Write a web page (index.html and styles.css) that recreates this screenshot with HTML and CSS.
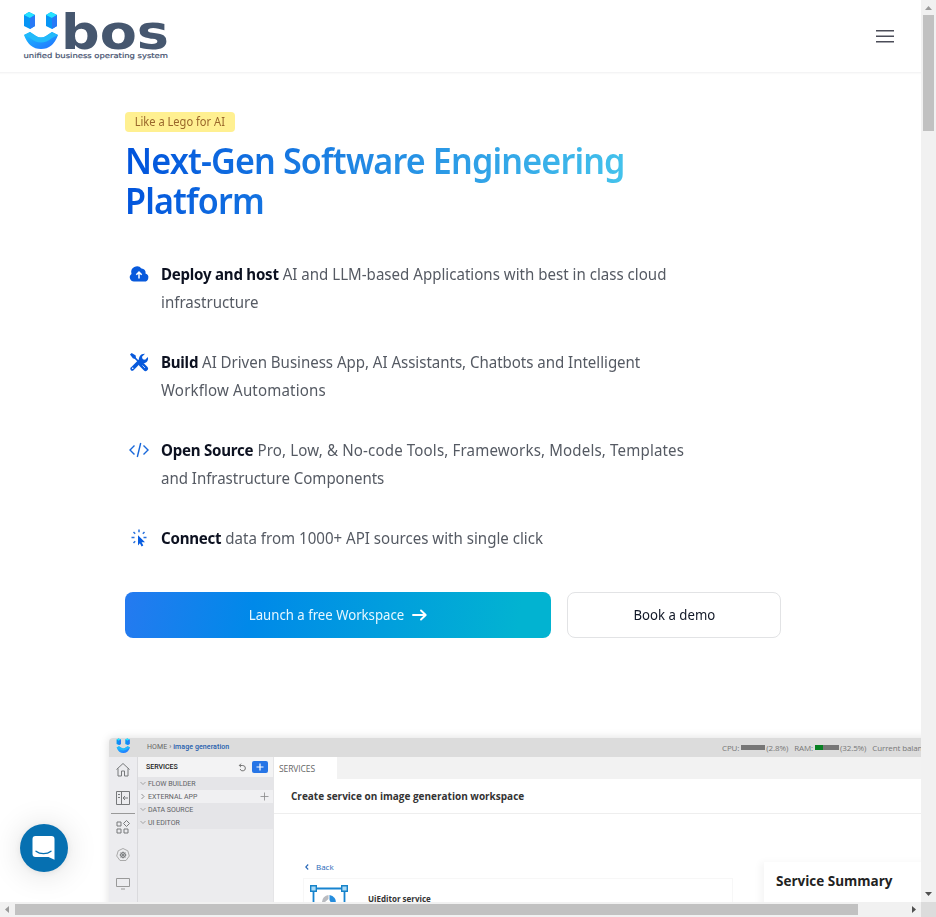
FILE: index.html
```html
<!DOCTYPE html>
<html lang="en">
<head>
<meta charset="utf-8">
<title>Ubos</title>
<link rel="stylesheet" href="styles.css">
</head>
<body>
<div class="viewport">
<div class="page">
  <header class="header">
    <svg class="logo" width="146" height="50" viewBox="0 0 146 50">
      <defs>
        <linearGradient id="smile" x1="0" x2="1" y1="0" y2="1"><stop offset="0" stop-color="#18c4ff"/><stop offset="1" stop-color="#246cff"/></linearGradient>
      </defs>
      <g id="mark" transform="translate(0 1)">
        <path d="M0 3l5-3 6 3v11l-5 3-6-3z" fill="#0795f5"/><path d="M0 3l5-3 6 3-5 3z" fill="#25e2ff"/><path d="M6 6l5-3v11l-5 3z" fill="#2879f6"/>
        <path d="M22 3l5-3 6 3v11l-5 3-6-3z" fill="#0795f5"/><path d="M22 3l5-3 6 3-5 3z" fill="#25e2ff"/><path d="M28 6l5-3v11l-5 3z" fill="#2879f6"/>
        <path d="M0 23l6-3 6 4q5 3 10 0l6-4 6 3q-5 14-17 14Q5 37 0 23z" fill="url(#smile)"/><path d="M0 23l6-3 6 4q5 3 10 0l6-4 6 3-6 3q-11 9-22 0z" fill="#22bafa"/>
      </g>
      <text class="wordmark" x="37" y="37.5" textLength="108" lengthAdjust="spacingAndGlyphs">bos</text>
      <text class="tagline" x="-.5" y="47" textLength="144.500" lengthAdjust="spacingAndGlyphs">unified business operating system</text>
    </svg>
    <svg class="burger" width="18" height="13" viewBox="0 0 18 13"><path d="M0 .75h18M0 6.250h18M0 11.750h18" stroke="#4b4d58" stroke-width="1.500"/></svg>
  </header>
  <main class="hero">
    <div class="badge"><span>Like a Lego for AI</span></div>
    <h1 class="title">Next-Gen Software Engineering<br>Platform</h1>
    <ul class="features">
      <li class="feature">
        <svg width="20" height="20" viewBox="0 0 20 20"><path d="M5 17.500a4.200 4.200 0 0 1-2.500-7.600A5.800 5.800 0 0 1 12.500 4.500a4 4 0 0 1 4 5A4.100 4.100 0 0 1 15 17.500z" fill="#0759dc"/><path d="M10 14.500v-6M7.300 10.800 10 8.100l2.700 2.700" fill="none" stroke="#fff" stroke-width="1.500"/></svg>
        <p><strong>Deploy and host</strong> AI and LLM-based Applications with best in class cloud<br>infrastructure</p>
      </li>
      <li class="feature">
        <svg width="20" height="20" viewBox="0 0 20 20"><path d="M3.200 16.800 12 8" fill="none" stroke="#0759dc" stroke-width="3.800" stroke-linecap="round"/><path d="M10 9.500c-.8-4.500 1.500-8 6-7.800l-3 3 .5 2.600 2.600.5 2.800-2.900c1 4-2.300 7.300-6.700 6z" fill="#0759dc"/><path d="M4 4l7.500 7.500" stroke="#0759dc" stroke-width="1.700"/><path d="M1 2.500 2.700 1l4 2.500.3 3.300-3-.2z" fill="#0759dc"/><path d="M12.500 12.500l4 4" stroke="#0759dc" stroke-width="5" stroke-linecap="round"/><circle cx="3.700" cy="16.300" r=".8" fill="#fff"/><path d="M13.500 13.500l2.500 2.500" stroke="#fff" stroke-width=".7"/></svg>
        <p><strong>Build</strong><span class="tight"> AI Driven Business App, AI Assistants, Chatbots and Intelligent</span><br><span class="loose">Workflow Automations</span></p>
      </li>
      <li class="feature">
        <svg width="20" height="20" viewBox="0 0 20 20"><path d="M5.500 5.500 1 10l4.500 4.500M14.500 5.500 19 10l-4.500 4.500M11.700 3 8.300 17" fill="none" stroke="#1767da" stroke-width="1.400"/></svg>
        <p><strong>Open Source</strong><span class="loose"> Pro, Low, &amp; No-code Tools, Frameworks, Models, Templates</span><br><span class="tight">and Infrastructure Components</span></p>
      </li>
      <li class="feature">
        <svg width="20" height="20" viewBox="0 0 20 20"><path d="M9 7.200l7 7-3.400.1 1.700 3.300-1.700.9-1.700-3.300-1.900 2.200z" fill="#075ce0"/><path d="M10 1.500v2.700M4.500 4l1.700 1.700M15.500 4l-1.700 1.700M2.500 9.500h3M14.500 9.500h3M4.500 15l1.700-1.700" stroke="#2771de" stroke-width="1.500"/></svg>
        <p><strong>Connect</strong> data from 1000+ API sources with single click</p>
      </li>
    </ul>
    <div class="actions">
      <a class="btn primary"><span>Launch a free Workspace</span><svg width="16" height="12" viewBox="0 0 16 12"><path d="M1 6h12.500M9 1.500 13.700 6 9 10.500" fill="none" stroke="#fff" stroke-width="1.900" stroke-linecap="round" stroke-linejoin="round"/></svg></a>
      <a class="btn secondary"><span>Book a demo</span></a>
    </div>
  </main>
  <section class="mock">
    <div class="mock-bar">
      <svg class="mini" width="15" height="15" viewBox="0 0 35 38"><use href="#mark"/></svg>
      <span class="crumb">HOME <i>›</i> <b>image generation</b></span>
      <span class="stats"><span>CPU:</span><i class="meter"></i><span>(2.8%)</span><span class="ram">RAM:</span><i class="meter used"></i><span>(32.5%)</span><span class="bal">Current balance</span></span>
    </div>
    <div class="mock-body">
      <div class="rail">
        <svg width="28" height="145" viewBox="0 0 28 145" fill="none" stroke="#77797b" stroke-width="1">
          <path d="M7.500 12.500 14 6.500l6.500 6M9 11.500V19h3.500v-5h3v5H19v-7.500"/>
          <path d="M7.500 34.500h13v13h-13zM12.500 34.500v13M9 37.500h2M9 40.500h2M19 41h-5M16 39l-2 2 2 2"/>
          <path d="M2 56.500h24" stroke="#999"/>
          <path d="M8 65h4v4H8zM8 72h4v4H8zM15 72h4v4h-4zM17.500 63.500l3 3-3 3-3-3z"/>
          <path d="M14 91.500l4.800 2.300 1.500 5.200-3.300 4.500h-6L7.700 99l1.500-5.200z" stroke="#aaa"/><circle cx="14" cy="98" r="2.500"/><path d="M14 94.500v7M10.500 98h7M11.500 95.500l5 5M16.500 95.500l-5 5" stroke-width=".7"/>
          <path d="M7.500 121.500h13v8h-13zM12 132h4" stroke="#999"/>
        </svg>
      </div>
      <div class="tree">
        <div class="tree-head"><span>SERVICES</span><svg width="9" height="9" viewBox="0 0 9 9"><path d="M1.500 2.500h3.300a2.700 2.700 0 1 1-2.700 3.500M3 .7 1.300 2.500 3 4.200" fill="none" stroke="#666" stroke-width=".9"/></svg><span class="add"><svg width="8" height="8" viewBox="0 0 8 8"><path d="M4 .5v7M.5 4h7" stroke="#fff" stroke-width="1.200"/></svg></span></div>
        <div class="row"><svg width="6" height="5" viewBox="0 0 6 5"><path d="M.5 1 3 3.500 5.500 1" fill="none" stroke="#888" stroke-width=".7"/></svg><span>FLOW BUILDER</span></div>
        <div class="row open-row"><svg width="6" height="7" viewBox="0 0 6 7"><path d="M1.500 1 4 3.500 1.500 6" fill="none" stroke="#777" stroke-width=".8"/></svg><span>EXTERNAL APP</span><svg class="plus" width="9" height="9" viewBox="0 0 9 9"><path d="M4.500.5v8M.5 4.500h8" stroke="#888" stroke-width=".8"/></svg></div>
        <div class="row"><svg width="6" height="5" viewBox="0 0 6 5"><path d="M.5 1 3 3.500 5.500 1" fill="none" stroke="#888" stroke-width=".7"/></svg><span>DATA SOURCE</span></div>
        <div class="row"><svg width="6" height="5" viewBox="0 0 6 5"><path d="M.5 1 3 3.500 5.500 1" fill="none" stroke="#888" stroke-width=".7"/></svg><span>UI EDITOR</span></div>
      </div>
      <div class="work">
        <div class="tabs"><span class="tab">SERVICES</span></div>
        <div class="work-title">Create service on image generation workspace</div>
        <div class="work-body">
          <div class="left">
            <div class="back"><svg width="4" height="6" viewBox="0 0 4 6"><path d="M3.200.5.8 3l2.400 2.500" fill="none" stroke="#2868b8" stroke-width="1.100"/></svg>Back</div>
            <div class="service">
              <svg width="40" height="25" viewBox="0 0 40 25"><path d="M4.500 25V4.500h31V25" fill="none" stroke="#1784d0" stroke-width="1.800"/><path d="M1.700 1.700h5.600v5.600H1.700zM32.700 1.700h5.600v5.600h-5.600z" fill="#a9d9f6" stroke="#1683c9" stroke-width="1.400"/><path d="M13 18a7 7 0 0 1 6.500-7v4L16 18v7h-3z" fill="#b9bbc0"/><path d="M20.500 11a7 7 0 0 1 6 9l-3 2-3-6z" fill="#268ddd"/></svg>
              <span>UiEditor service</span>
            </div>
          </div>
          <div class="summary"><h2>Service Summary</h2><p>Name</p></div>
        </div>
      </div>
    </div>
  </section>
  <div class="chat"><svg width="24" height="26" viewBox="0 0 24 26"><path d="M3.500 1h16a3 3 0 0 1 3 3v20.800L16.500 22h-13a3 3 0 0 1-3-3V4a3 3 0 0 1 3-3z" fill="#fff"/><path d="M4 16.200c4 3.300 11 3.300 15 0" fill="none" stroke="#0670b1" stroke-width="1.300" stroke-linecap="round"/></svg></div>
</div>
<div class="vbar"><svg width="15" height="14" viewBox="0 0 15 14"><path d="M4 10h7L7.500 6z" fill="#9a9a9a"/></svg><i class="vthumb"></i><svg class="end" width="15" height="15" viewBox="0 0 15 15"><path d="M4 5h7L7.500 9z" fill="#505050"/></svg></div>
<div class="hbar"><svg width="15" height="15" viewBox="0 0 15 15"><path d="M9 4v7L5 7.500z" fill="#9a9a9a"/></svg><i class="hthumb"></i><svg class="end" width="15" height="15" viewBox="0 0 15 15"><path d="M6 4v7l4-3.500z" fill="#505050"/></svg></div>
<div class="corner"></div>
</div>
</body>
</html>
```
FILE: styles.css
```css
* { box-sizing: border-box; }
body { margin: 0; overflow: hidden; background: #fff; font-family: "Noto Sans", sans-serif; color: #111827; }
h1, h2, p, ul { margin: 0; padding: 0; }
i { font-style: normal; }
svg { display: block; flex: none; }
.viewport { display: grid; grid-template-columns: 921px 15px; grid-template-rows: 902px 15px; width: 936px; height: 917px; }
.page { position: relative; overflow: hidden; }
.header { height: 73px; padding: 11px 27px 0 24px; display: flex; justify-content: space-between; border-bottom: 1px solid #f4f4f5; box-shadow: 0 1px 1px #fafafa; }
.logo { overflow: visible; }
.wordmark { font: bold 48px "DejaVu Sans", sans-serif; fill: #46576f; }
.tagline { font: 7px "DejaVu Sans", sans-serif; fill: #46526f; stroke: #46526f; stroke-width: .2px; }
.burger { margin-top: 19px; }
.hero { padding: 39px 0 0 125px; height: 665px; width: 781px; }
.badge { width: 110px; height: 20px; border-radius: 4px; background: #fff091; color: #9a672b; font-size: 12px; line-height: 20px; text-align: center; }
.badge span { display: inline-block; transform: scaleX(.925); }
.title { margin-top: 9px; width: 561px; font-size: 36px; line-height: 40px; font-weight: 600; letter-spacing: -.9px; transform: scaleX(.948); transform-origin: left; background: linear-gradient(100deg, #0052dc, #49cbed); -webkit-background-clip: text; background-clip: text; color: transparent; white-space: nowrap; }
.features { list-style: none; margin-top: 39px; display: flex; flex-direction: column; gap: 32px; }
.feature { display: flex; align-items: flex-start; gap: 11.500px; padding-left: 4px; font-size: 16px; line-height: 28px; color: #555a63; white-space: nowrap; }
.feature p { transform: scaleX(.942); transform-origin: left; }
.loose { letter-spacing: .16px; }
.tight { letter-spacing: -.04px; }
.feature svg { margin-top: 4px; }
.feature strong { color: #0c1120; font-weight: 700; letter-spacing: -.25px; }
.actions { display: flex; gap: 16px; margin-top: 40px; }
.btn { display: flex; align-items: center; justify-content: center; height: 46px; border-radius: 8px; font-size: 14px; padding-bottom: 1px; }
.btn span { transform: scaleX(.942); }
.primary { width: 426px; gap: 2px; padding-right: 4px; color: #e5f7ff; background: linear-gradient(100deg, #257af0, #0089e9 30%, #02b3d1 92%); }
.secondary { width: 214px; border: 1px solid #e2e3e5; }
.mock { margin-left: 109px; width: 900px; height: 180px; border-radius: 4px 0 0; background: #fff; overflow: hidden; box-shadow: 0 0 10px #0002; font-family: "Open Sans", sans-serif; }
.mock-bar { height: 19px; display: flex; background: #dcdcdc; font-size: 7px; line-height: 18px; color: #666; padding-left: 7px; white-space: nowrap; }
.crumb { margin-left: 16px; width: 575px; font: 7px/18px Roboto, sans-serif; letter-spacing: .1px; }
.crumb b { color: #245dad; font-weight: 500; }
.stats { display: flex; align-items: center; font-size: 8px; color: #777; letter-spacing: -.12px; }
.meter { width: 24px; height: 5px; margin: 0 1px 0 2px; background: #777; }
.used { background: linear-gradient(90deg, #078123 33%, #777 33%); }
.ram, .bal { margin-left: 6px; }
.mock-body { display: flex; height: 161px; }
.rail { width: 28px; background: #ececef; }
.tree { width: 137px; background: #ececee; border-left: 1px solid #dadadd; border-right: 1px solid #e5e5e7; }
.tree-head { height: 20px; display: flex; align-items: center; background: #f3f3f4; padding-left: 8px; color: #222; font: 500 7px Roboto, sans-serif; }
.tree-head > span:first-child { width: 92px; }
.add { display: flex; align-items: center; justify-content: center; width: 16px; height: 12px; margin-left: 5px; border-radius: 2px; background: #2675e6; }
.row { height: 13px; display: flex; align-items: center; gap: 2px; padding-left: 2px; background: #e5e5e8; color: #606165; font: 7px Roboto, sans-serif; }
.open-row { background: #f0f0f2; }
.plus { margin-left: auto; margin-right: 4px; }
.work { width: 735px; }
.tabs { height: 22px; background: #f2f2f2; }
.tab { display: block; width: 63px; height: 22px; background: #fff; padding-left: 5px; font-size: 8.500px; line-height: 23px; color: #666; letter-spacing: -.1px; }
.work-title { height: 35px; border-bottom: 1px solid #eee; padding-left: 17px; color: #333; font-size: 10px; line-height: 35px; font-weight: 700; }
.work-body { display: flex; height: 104px; }
.left { width: 490px; padding: 47px 31px 0; }
.back { display: flex; align-items: center; gap: 7px; height: 11px; color: #2868b8; font-size: 8px; }
.service { display: flex; margin-top: 6px; margin-left: -2px; height: 42px; border: 1px solid #f7f7f7; padding: 5px 0 0 5px; color: #333; font-size: 8px; font-weight: 700; gap: 19px; line-height: 29px; }
.summary { width: 240px; margin-top: 48px; padding: 10px 12px; box-shadow: -4px 0 7px #0000000a; }
.summary h2 { font-size: 13.500px; line-height: 19px; font-weight: 700; color: #222; }
.summary p { font-size: 8px; line-height: 12px; margin-top: 7px; color: #777; }
.chat { position: absolute; left: 20px; top: 824px; width: 48px; height: 48px; border-radius: 50%; background: #0670b1; display: flex; align-items: center; justify-content: center; box-shadow: 0 1px 6px #0001, 0 2px 32px #0002; }
.vbar { display: flex; flex-direction: column; background: #f1f1f1; }
.vthumb { width: 11px; height: 116px; margin: 1px 0 0 2px; background: #c1c1c1; }
.hbar { display: flex; background: #f1f1f1; }
.hthumb { width: 843px; height: 11px; margin-top: 2px; background: #c1c1c1; }
.vbar .end { margin-top: auto; }
.hbar .end { margin-left: auto; }
.corner { background: #dcdcdc; }
```
